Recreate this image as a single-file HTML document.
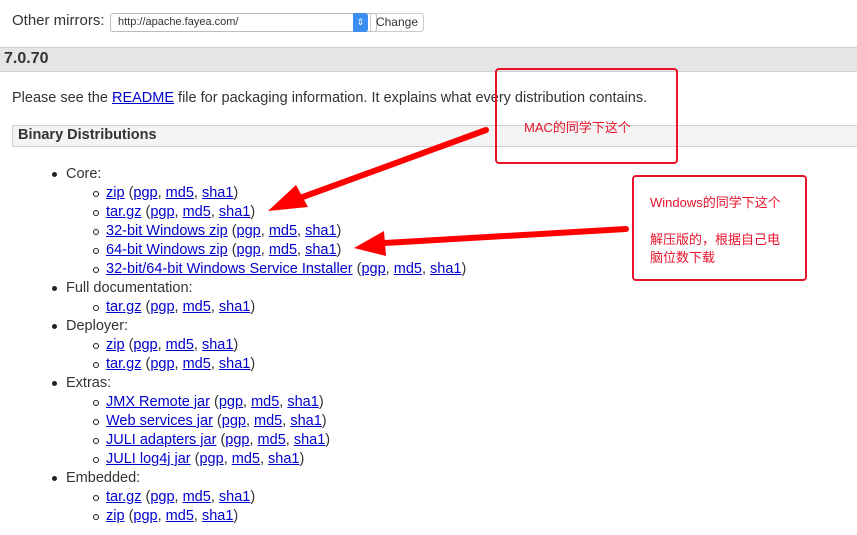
<!DOCTYPE html>
<html><head><meta charset="utf-8"><style>
body{margin:0;width:857px;height:535px;background:#fff;font-family:"Liberation Sans","Noto Sans CJK SC",sans-serif;color:#333;position:relative;overflow:hidden}
.a{position:absolute;white-space:nowrap;font-size:14.5px;line-height:19px}
a{color:#00c;text-decoration:underline}
.d{position:absolute;width:5px;height:5px;border-radius:50%;background:#222}
.c{position:absolute;width:4px;height:4px;border-radius:50%;border:1px solid #222}
.note{position:absolute;border:2px solid #e8132b;border-radius:4px;color:#e8132b;font-size:13px;line-height:18px}
</style></head><body>
<div class="a" style="left:12px;top:11px;font-size:15px">Other mirrors:</div>
<div style="position:absolute;left:110px;top:13px;width:258px;height:17px;border:1px solid #bbb;border-radius:3px;font-size:11px;line-height:17px;padding-left:7px;box-sizing:content-box">http://apache.fayea.com/</div>
<div style="position:absolute;left:353px;top:13px;width:15px;height:19px;background:#3b8ef0;border-radius:0 3px 3px 0;color:#fff;font-size:9px;text-align:center;line-height:19px">⇕</div>
<div style="position:absolute;left:370px;top:13px;width:52px;height:17px;border:1px solid #ccc;border-radius:3px;font-size:12px;line-height:17px;text-align:center">Change</div>
<div style="position:absolute;left:0;top:47px;width:857px;height:23px;background:#e5e5e5;border-top:1px solid #d0d0d0;border-bottom:1px solid #d0d0d0"></div>
<div class="a" style="left:4px;top:49px;font-weight:bold;font-size:16px">7.0.70</div>
<div class="a" style="left:12px;top:89px;font-size:14.5px">Please see the <a>README</a> file for packaging information. It explains what every distribution contains.</div>
<div style="position:absolute;left:12px;top:125px;width:850px;height:20px;background:#f4f4f4;border:1px solid #d0d0d0"></div>
<div class="a" style="left:18px;top:126px;font-weight:bold">Binary Distributions</div>

<div class="d" style="left:52px;top:172px"></div><div class="a" style="left:66px;top:165px">Core:</div>
<div class="c" style="left:93px;top:191px"></div><div class="a" style="left:106px;top:184px"><a>zip</a> (<a>pgp</a>, <a>md5</a>, <a>sha1</a>)</div>
<div class="c" style="left:93px;top:210px"></div><div class="a" style="left:106px;top:203px"><a>tar.gz</a> (<a>pgp</a>, <a>md5</a>, <a>sha1</a>)</div>
<div class="c" style="left:93px;top:229px"></div><div class="a" style="left:106px;top:222px"><a>32-bit Windows zip</a> (<a>pgp</a>, <a>md5</a>, <a>sha1</a>)</div>
<div class="c" style="left:93px;top:248px"></div><div class="a" style="left:106px;top:241px"><a>64-bit Windows zip</a> (<a>pgp</a>, <a>md5</a>, <a>sha1</a>)</div>
<div class="c" style="left:93px;top:267px"></div><div class="a" style="left:106px;top:260px"><a>32-bit/64-bit Windows Service Installer</a> (<a>pgp</a>, <a>md5</a>, <a>sha1</a>)</div>
<div class="d" style="left:52px;top:286px"></div><div class="a" style="left:66px;top:279px">Full documentation:</div>
<div class="c" style="left:93px;top:305px"></div><div class="a" style="left:106px;top:298px"><a>tar.gz</a> (<a>pgp</a>, <a>md5</a>, <a>sha1</a>)</div>
<div class="d" style="left:52px;top:324px"></div><div class="a" style="left:66px;top:317px">Deployer:</div>
<div class="c" style="left:93px;top:343px"></div><div class="a" style="left:106px;top:336px"><a>zip</a> (<a>pgp</a>, <a>md5</a>, <a>sha1</a>)</div>
<div class="c" style="left:93px;top:362px"></div><div class="a" style="left:106px;top:355px"><a>tar.gz</a> (<a>pgp</a>, <a>md5</a>, <a>sha1</a>)</div>
<div class="d" style="left:52px;top:381px"></div><div class="a" style="left:66px;top:374px">Extras:</div>
<div class="c" style="left:93px;top:400px"></div><div class="a" style="left:106px;top:393px"><a>JMX Remote jar</a> (<a>pgp</a>, <a>md5</a>, <a>sha1</a>)</div>
<div class="c" style="left:93px;top:419px"></div><div class="a" style="left:106px;top:412px"><a>Web services jar</a> (<a>pgp</a>, <a>md5</a>, <a>sha1</a>)</div>
<div class="c" style="left:93px;top:438px"></div><div class="a" style="left:106px;top:431px"><a>JULI adapters jar</a> (<a>pgp</a>, <a>md5</a>, <a>sha1</a>)</div>
<div class="c" style="left:93px;top:457px"></div><div class="a" style="left:106px;top:450px"><a>JULI log4j jar</a> (<a>pgp</a>, <a>md5</a>, <a>sha1</a>)</div>
<div class="d" style="left:52px;top:476px"></div><div class="a" style="left:66px;top:469px">Embedded:</div>
<div class="c" style="left:93px;top:495px"></div><div class="a" style="left:106px;top:488px"><a>tar.gz</a> (<a>pgp</a>, <a>md5</a>, <a>sha1</a>)</div>
<div class="c" style="left:93px;top:514px"></div><div class="a" style="left:106px;top:507px"><a>zip</a> (<a>pgp</a>, <a>md5</a>, <a>sha1</a>)</div>

<div class="note" style="left:495px;top:68px;width:179px;height:92px"><div style="position:absolute;left:27px;top:49px">MAC的同学下这个</div></div>
<div class="note" style="left:632px;top:175px;width:171px;height:102px"><div style="position:absolute;left:16px;top:17px">Windows的同学下这个</div><div style="position:absolute;left:16px;top:54px;width:150px">解压版的，根据自己电<br>脑位数下载</div></div>
<svg style="position:absolute;left:0;top:0" width="857" height="535">
<path d="M486 130 L300 198" stroke="#f00" stroke-width="6" stroke-linecap="round"/>
<polygon points="268,211 296,185 308,207" fill="#f00"/>
<path d="M626 229 L385 243" stroke="#f00" stroke-width="6" stroke-linecap="round"/>
<polygon points="354,248 384,231 386,256" fill="#f00"/>
</svg>
</body></html>
